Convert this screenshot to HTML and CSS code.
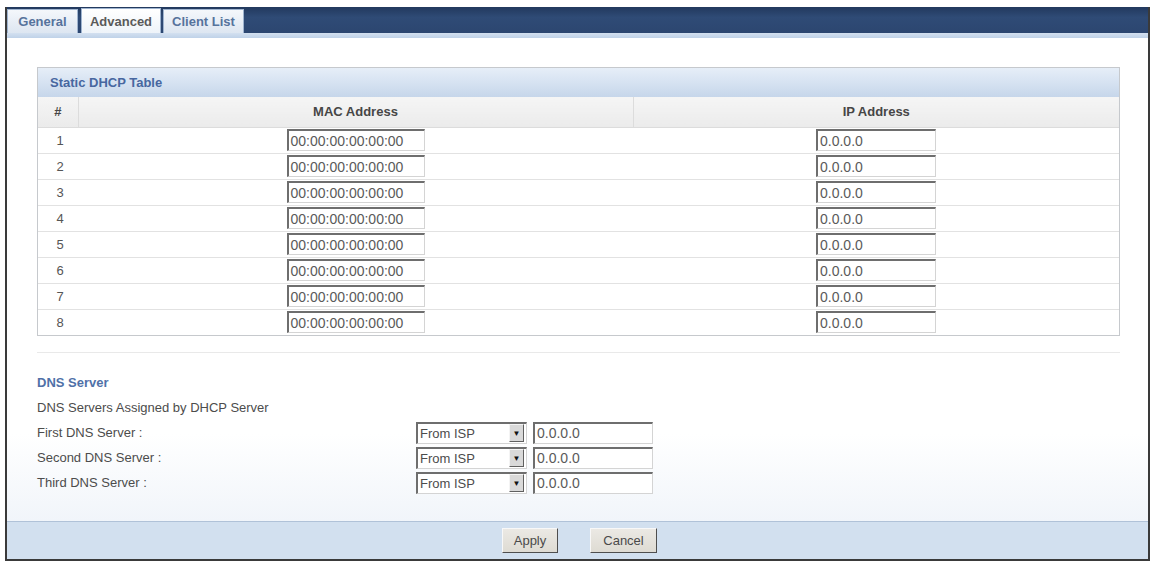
FILE: index.html
```html
<!DOCTYPE html>
<html>
<head>
<meta charset="utf-8">
<link rel="stylesheet" href="styles.css">
</head>
<body>
<div class="frame">
  <div class="tabbar">
    <div class="tab tab-general">General</div>
    <div class="tab tab-active tab-advanced">Advanced</div>
    <div class="tab tab-client">Client List</div>
  </div>
  <div class="tabline"></div>
  <div class="content">
    <div class="panel">
      <div class="panel-title">Static DHCP Table</div>
      <table class="dhcp">
        <colgroup><col class="c-num"><col class="c-mac"><col class="c-ip"></colgroup>
        <thead>
          <tr><th>#</th><th>MAC Address</th><th>IP Address</th></tr>
        </thead>
        <tbody>
          <tr><td class="num">1</td><td><div class="field mac">00:00:00:00:00:00</div></td><td><div class="field ip">0.0.0.0</div></td></tr>
          <tr><td class="num">2</td><td><div class="field mac">00:00:00:00:00:00</div></td><td><div class="field ip">0.0.0.0</div></td></tr>
          <tr><td class="num">3</td><td><div class="field mac">00:00:00:00:00:00</div></td><td><div class="field ip">0.0.0.0</div></td></tr>
          <tr><td class="num">4</td><td><div class="field mac">00:00:00:00:00:00</div></td><td><div class="field ip">0.0.0.0</div></td></tr>
          <tr><td class="num">5</td><td><div class="field mac">00:00:00:00:00:00</div></td><td><div class="field ip">0.0.0.0</div></td></tr>
          <tr><td class="num">6</td><td><div class="field mac">00:00:00:00:00:00</div></td><td><div class="field ip">0.0.0.0</div></td></tr>
          <tr><td class="num">7</td><td><div class="field mac">00:00:00:00:00:00</div></td><td><div class="field ip">0.0.0.0</div></td></tr>
          <tr><td class="num">8</td><td><div class="field mac">00:00:00:00:00:00</div></td><td><div class="field ip">0.0.0.0</div></td></tr>
        </tbody>
      </table>
    </div>
    <div class="sep"></div>
    <div class="dns">
      <div class="dns-title">DNS Server</div>
      <div class="dns-row"><span class="label">DNS Servers Assigned by DHCP Server</span></div>
      <div class="dns-row">
        <span class="label">First DNS Server :</span>
        <div class="select"><span class="select-value">From ISP</span><span class="select-btn">&#9660;</span></div>
        <div class="field dns-ip">0.0.0.0</div>
      </div>
      <div class="dns-row">
        <span class="label">Second DNS Server :</span>
        <div class="select"><span class="select-value">From ISP</span><span class="select-btn">&#9660;</span></div>
        <div class="field dns-ip">0.0.0.0</div>
      </div>
      <div class="dns-row">
        <span class="label">Third DNS Server :</span>
        <div class="select"><span class="select-value">From ISP</span><span class="select-btn">&#9660;</span></div>
        <div class="field dns-ip">0.0.0.0</div>
      </div>
    </div>
  </div>
  <div class="footer">
    <button class="btn btn-apply">Apply</button>
    <button class="btn btn-cancel">Cancel</button>
  </div>
</div>
</body>
</html>
```

FILE: styles.css
```css
* { box-sizing: border-box; }

html, body {
  margin: 0;
  padding: 0;
  background: #ffffff;
}

body {
  font-family: "Liberation Sans", Arial, sans-serif;
  font-size: 13px;
  color: #4c4c4c;
}

.frame {
  margin: 7px 0 0 5px;
  width: 1145px;
  height: 554px;
  border: 2px solid #3a3a3a;
  border-top: 0;
  display: flex;
  flex-direction: column;
}

.tabbar {
  height: 26px;
  background: linear-gradient(#22395e, #2f4b76 40%, #2c4670);
  display: flex;
  align-items: flex-end;
  gap: 3px;
}

.tab {
  height: 24px;
  display: flex;
  align-items: center;
  justify-content: center;
  font-weight: bold;
  font-size: 13px;
  color: #56739c;
  background: linear-gradient(#f4f7fb, #dde6f1);
  border: 1px solid #9fb4cf;
  border-bottom: 0;
}

.tab-general { width: 71px; }
.tab-advanced { width: 80px; }
.tab-client { width: 81px; margin-left: -1px; }

.tab-active {
  color: #5a5a5a;
  background: linear-gradient(#ffffff, #eef3f9);
  height: 25px;
}

.tabline {
  height: 5px;
  background: linear-gradient(#d3e0f0, #bfd2e8);
}

.content {
  flex: 1;
  padding: 29px 28px 0 30px;
  background: linear-gradient(#ffffff 82%, #f1f5fa);
}

.panel {
  border: 1px solid #c6c9cd;
}

.panel-title {
  height: 29px;
  display: flex;
  align-items: center;
  padding-left: 12px;
  font-weight: bold;
  color: #4767a0;
  background: linear-gradient(#e6eef8, #d3e0f0 60%, #c6d6ea);
}

.dhcp {
  width: 100%;
  border-collapse: collapse;
  table-layout: fixed;
}

.c-num { width: 40px; }
.c-mac { width: 555px; }

.dhcp th {
  height: 30px;
  font-weight: bold;
  color: #464646;
  background: linear-gradient(#f5f5f5, #ebebeb);
  border-left: 1px solid #dcdcdc;
  border-bottom: 1px solid #dcdcdc;
  text-align: center;
  padding: 0;
}

.dhcp th:first-child { border-left: 0; }

.dhcp td {
  height: 26px;
  padding: 0;
  border-bottom: 1px solid #e2e2e2;
  text-align: center;
  vertical-align: middle;
}

.dhcp tbody tr:last-child td { border-bottom: 0; }

.dhcp td.num {
  color: #555;
  padding-left: 4px;
}

.field {
  display: inline-flex;
  align-items: center;
  height: 22px;
  padding-left: 2px;
  background: #fff;
  border-top: 2px solid #6e6e6e;
  border-left: 2px solid #6e6e6e;
  border-right: 1px solid #d4d4d4;
  border-bottom: 1px solid #d4d4d4;
  font-size: 14px;
  color: #5a5a5a;
  text-align: left;
  vertical-align: middle;
}

.mac { width: 138px; }
.ip { width: 120px; }

.sep {
  margin-top: 16px;
  height: 1px;
  background: #e9e9e9;
}

.dns {
  margin-top: 17px;
}

.dns-title {
  height: 25px;
  display: flex;
  align-items: center;
  font-weight: bold;
  color: #4f71a8;
}

.dns-row {
  height: 25px;
  display: flex;
  align-items: center;
}

.label {
  width: 379px;
}

.select {
  width: 111px;
  height: 22px;
  display: flex;
  align-items: center;
  background: #fff;
  border-top: 2px solid #6e6e6e;
  border-left: 2px solid #6e6e6e;
  border-right: 1px solid #d4d4d4;
  border-bottom: 1px solid #d4d4d4;
}

.select-value {
  flex: 1;
  padding-left: 2px;
  color: #4c4c4c;
  font-size: 13px;
}

.select-btn {
  width: 15px;
  height: 18px;
  margin-right: 2px;
  display: flex;
  align-items: center;
  justify-content: center;
  font-size: 8px;
  color: #111;
  background: #d9d9d9;
  border: 1px solid;
  border-color: #f4f4f4 #606060 #606060 #f4f4f4;
}

.dns-ip {
  width: 120px;
  margin-left: 6px;
}

.footer {
  height: 38px;
  border-top: 1px solid #b0c2d8;
  background: #d2e0ef;
  display: flex;
  align-items: center;
  justify-content: center;
  gap: 32px;
  padding-left: 4px;
}

.btn {
  height: 25px;
  padding: 0;
  font-family: "Liberation Sans", Arial, sans-serif;
  font-size: 13px;
  color: #4a4a4a;
  background: linear-gradient(#ebe9e4, #dedbd3);
  border: 1px solid;
  border-color: #f8f8f8 #4e4e4e #4e4e4e #f8f8f8;
}

.btn-apply { width: 56px; }
.btn-cancel { width: 67px; }
```
